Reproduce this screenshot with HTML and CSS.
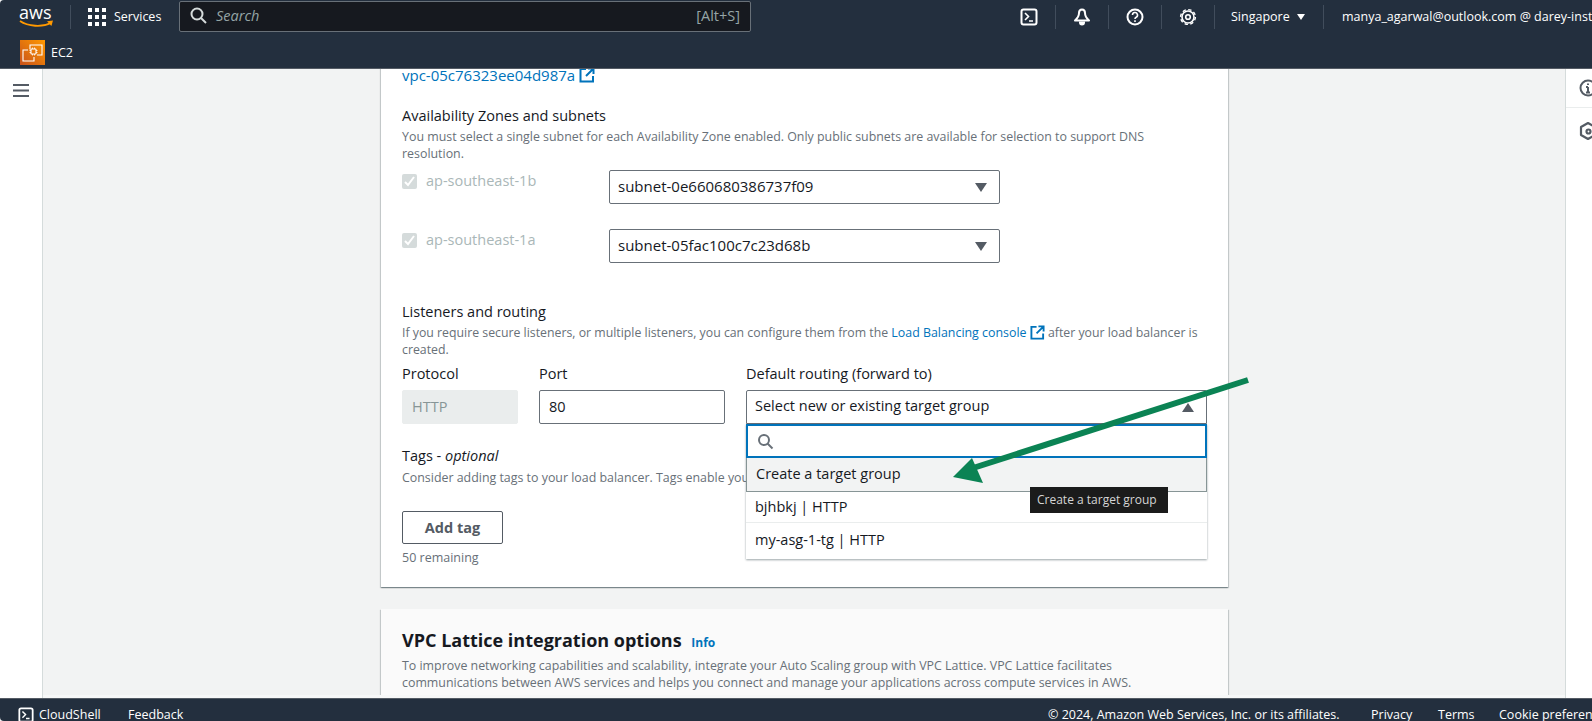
FILE: index.html
```html
<!DOCTYPE html>
<html lang="en">
<head>
  <meta charset="UTF-8">
  <title>Create Auto Scaling group | EC2</title>
  <link rel="stylesheet" href="styles.css">
</head>
<body>
  <header id="top-nav">
    <div class="nav-row">
      <div class="aws-logo">
        <span class="aws-word">aws</span>
        <svg class="aws-smile" width="36" height="9" viewBox="0 0 36 9"><path d="M1 1C9 6.500 23 7.500 32 3" fill="none" stroke="#f90" stroke-width="1.800"/><path d="M28 1.200l6-.7-1.600 5.500z" fill="#f90"/></svg>
      </div>
      <span class="nav-sep sep-logo"></span>
      <svg class="grid-icon" width="18" height="18" viewBox="0 0 18 18" fill="#fff">
        <rect width="4" height="4"/><rect x="7" width="4" height="4"/><rect x="14" width="4" height="4"/>
        <rect y="7" width="4" height="4"/><rect x="7" y="7" width="4" height="4"/><rect x="14" y="7" width="4" height="4"/>
        <rect y="14" width="4" height="4"/><rect x="7" y="14" width="4" height="4"/><rect x="14" y="14" width="4" height="4"/>
      </svg>
      <span class="nav-services">Services</span>
      <div class="nav-search">
        <svg width="17" height="17" viewBox="0 0 17 17" fill="none" stroke="#d5dbdb" stroke-width="2"><circle cx="7" cy="7" r="5.500"/><path d="M11 11l5 5"/></svg>
        <span class="search-hint">Search</span>
        <span class="search-key">[Alt+S]</span>
      </div>
      <div class="nav-right">
        <span class="nav-icon">
          <svg width="18" height="18" viewBox="0 0 18 18" fill="none" stroke="#fff" stroke-width="2"><rect x="1.500" y="1.500" width="15" height="15" rx="2"/><path d="M5 5l3.500 3.500L5 12M9 13h4" stroke-width="1.600"/></svg>
        </span>
        <span class="nav-icon">
          <svg width="18" height="18" viewBox="0 0 18 18" fill="none" stroke="#fff" stroke-width="2"><path d="M9 1.500c-2 0-3 1.500-3 3.500 0 3-1.200 5-4 7.500h14c-2.800-2.500-4-4.500-4-7.500 0-2-1-3.500-3-3.500z" stroke-linejoin="round"/><path d="M7 14.500a2 2 0 0 0 4 0z" fill="#fff"/></svg>
        </span>
        <span class="nav-icon">
          <svg width="18" height="18" viewBox="0 0 18 18" fill="none" stroke="#fff" stroke-width="2"><circle cx="9" cy="9" r="7.500"/><path d="M6.500 7a2.500 2.500 0 1 1 3.700 2.200C9.300 9.700 9 10.200 9 11" stroke-width="1.600"/><path d="M9 12.300v1.700" stroke-width="1.600"/></svg>
        </span>
        <span class="nav-icon">
          <svg width="18" height="18" viewBox="0 0 18 18" fill="none" stroke="#fff"><circle cx="9" cy="9" r="6" stroke-width="1.600"/><circle cx="9" cy="9" r="7.400" stroke-width="1.400" stroke-dasharray="3.400 2.410"/><circle cx="9" cy="9" r="2.300" stroke-width="1.600"/></svg>
        </span>
        <span class="nav-region">Singapore<span class="caret"></span></span>
        <span class="nav-user">manya_agarwal@outlook.com @ darey-instance-account</span>
      </div>
    </div>
    <div class="nav-row service-row">
      <span class="ec2-tile">
        <svg width="21" height="18" viewBox="0 0 21 18" fill="none" stroke="#fff" stroke-width="1.100"><path d="M8 5.500V1h12v10h-5"/><path d="M6 6H1v11h11v-4"/><rect x="9" y="5" width="5" height="5" rx=".5"/><path d="M7.500 6.500H9M7.500 8.500H9M14 6.500h1.500M14 8.500h1.500M10.500 3.500V5M12.500 3.500V5M10.500 10v1.500M12.500 10v1.500" stroke-width=".8"/></svg>
      </span>
      <span class="service-name">EC2</span>
    </div>
  </header>

  <div id="layout">
    <aside class="side-nav">
      <svg width="16" height="13" viewBox="0 0 16 13" fill="none" stroke="#545b64" stroke-width="2"><path d="M0 1h16M0 6.500h16M0 12h16"/></svg>
    </aside>

    <main class="content">
      <section class="card">
        <a class="vpc-link">vpc-05c76323ee04d987a
          <svg class="ext-icon" width="16" height="16" viewBox="0 0 16 16" fill="none" stroke="#0073bb" stroke-width="2"><path d="M7 2H1.500v12.500H14V9M9 1.500h5.500V7M14 2L7 9"/></svg>
        </a>

        <h3 class="field-title zones-title">Availability Zones and subnets</h3>
        <p class="hint">You must select a single subnet for each Availability Zone enabled. Only public subnets are available for selection to support DNS resolution.</p>

        <div class="zone-row">
          <label class="zone-check">
            <span class="checkbox"><svg width="11" height="11" viewBox="0 0 11 11" fill="none" stroke="#fff" stroke-width="2"><path d="M1 6l3 3 6-8"/></svg></span>
            ap-southeast-1b
          </label>
          <div class="select zone-select">subnet-0e660680386737f09<span class="tri"></span></div>
        </div>
        <div class="zone-row second-zone">
          <label class="zone-check">
            <span class="checkbox"><svg width="11" height="11" viewBox="0 0 11 11" fill="none" stroke="#fff" stroke-width="2"><path d="M1 6l3 3 6-8"/></svg></span>
            ap-southeast-1a
          </label>
          <div class="select zone-select">subnet-05fac100c7c23d68b<span class="tri"></span></div>
        </div>

        <h3 class="field-title listeners-title">Listeners and routing</h3>
        <p class="hint hint-tight">If you require secure listeners, or multiple listeners, you can configure them from the <a class="hint-link">Load Balancing console <svg class="ext-icon-sm" width="15" height="15" viewBox="0 0 16 16" fill="none" stroke="#0073bb" stroke-width="2"><path d="M7 2H1.500v12.500H14V9M9 1.500h5.500V7M14 2L7 9"/></svg></a> after your load balancer is created.</p>

        <div class="listener-grid">
          <div class="col-protocol">
            <div class="col-label">Protocol</div>
            <div class="field field-disabled">HTTP</div>
          </div>
          <div class="col-port">
            <div class="col-label">Port</div>
            <div class="field">80</div>
          </div>
          <div class="col-routing">
            <div class="col-label">Default routing (forward to)</div>
            <div class="select-wrap">
              <div class="select routing-select">Select new or existing target group<span class="tri tri-up"></span></div>
              <div class="dropdown">
                <div class="drop-search">
                  <svg width="17" height="17" viewBox="0 0 17 17" fill="none" stroke="#687078" stroke-width="2"><circle cx="7" cy="7" r="5"/><path d="M10.500 10.500l5 5"/></svg>
                </div>
                <div class="drop-item drop-active">Create a target group</div>
                <div class="drop-item">bjhbkj | HTTP</div>
                <div class="drop-item drop-last">my-asg-1-tg | HTTP</div>
                <div class="tooltip">Create a target group</div>
              </div>
            </div>
          </div>
        </div>

        <h3 class="field-title tags-title">Tags - <em>optional</em></h3>
        <p class="hint hint-tags">Consider adding tags to your load balancer. Tags enable you</p>
        <button class="btn">Add tag</button>
        <p class="remaining">50 remaining</p>
      </section>

      <section class="card card-lattice">
        <h2 class="card-title">VPC Lattice integration options <a class="info-link">Info</a></h2>
        <p class="hint">To improve networking capabilities and scalability, integrate your Auto Scaling group with VPC Lattice. VPC Lattice facilitates communications between AWS services and helps you connect and manage your applications across compute services in AWS.</p>
      </section>
    </main>

    <aside class="side-rail">
      <div class="rail-item">
        <svg width="18" height="18" viewBox="0 0 18 18" fill="none" stroke="#545b64" stroke-width="2"><circle cx="9" cy="9" r="7.500"/><path d="M9 8v5.500M7 8h2M7 13.500h4M9 4.500v1.600"/></svg>
      </div>
      <div class="rail-item">
        <svg width="18" height="18" viewBox="0 0 18 18" fill="none" stroke="#545b64" stroke-width="2.200"><path d="M9 1l7 4v8l-7 4-7-4V5z" stroke-linejoin="round"/><circle cx="9.500" cy="9.500" r="2"/></svg>
      </div>
    </aside>
  </div>

  <footer id="footer">
    <svg class="foot-icon" width="16" height="16" viewBox="0 0 18 18" fill="none" stroke="#fff" stroke-width="2"><rect x="1.500" y="1.500" width="15" height="15" rx="2"/><path d="M5 5l3.500 3.500L5 12M9 13h4" stroke-width="1.600"/></svg>
    <span class="foot-cloud">CloudShell</span>
    <span class="foot-feedback">Feedback</span>
    <span class="foot-copy">&copy; 2024, Amazon Web Services, Inc. or its affiliates.</span>
    <span class="foot-privacy">Privacy</span>
    <span class="foot-terms">Terms</span>
    <span class="foot-cookie">Cookie preferences</span>
  </footer>

  <!-- annotation drawn on top of the screenshot -->
  <svg class="annotation" width="1592" height="721" viewBox="0 0 1592 721">
    <path d="M1248 380L970 469" stroke="#0b8354" stroke-width="6" fill="none"/>
    <path d="M953 477L972 458L983 483z" fill="#0b8354"/>
  </svg>
</body>
</html>
```

FILE: styles.css
```css
* {
  box-sizing: border-box;
}

html, body {
  height: 100%;
}

body {
  margin: 0;
  position: relative;
  display: flex;
  flex-direction: column;
  height: 100vh;
  overflow: hidden;
  font-family: "Open Sans", Arial, sans-serif;
  font-size: 14.5px;
  line-height: 20px;
  color: #16191f;
  background: #f7f8f8;
}

/* top nav */
#top-nav {
  flex: none;
  height: 69px;
  background: #232f3e;
  border-bottom: 1px solid #545b64;
  border-top-left-radius: 4px;
  color: #fff;
}

.nav-row {
  display: flex;
  align-items: center;
  height: 33px;
}

.aws-logo {
  flex: none;
  display: flex;
  flex-direction: column;
  width: 34px;
  margin-left: 19px;
}

.aws-word {
  font-size: 18px;
  line-height: 14px;
  height: 15px;
}

.aws-smile {
  display: block;
}

.nav-sep {
  flex: none;
  width: 1px;
  height: 24px;
  background: #414d5c;
}

.sep-logo {
  margin-left: 17px;
}

.grid-icon {
  flex: none;
  margin-left: 17px;
}

.nav-services {
  flex: none;
  margin-left: 8px;
  width: 65px;
  font-size: 12.5px;
}

.nav-search {
  flex: none;
  display: flex;
  align-items: center;
  width: 572px;
  height: 31px;
  padding: 0 10px 2px;
  background: #16191f;
  border: 1px solid #687078;
  border-radius: 2px;
  font-size: 14.5px;
  color: #95a5a6;
}

.search-hint {
  margin-left: 9px;
  font-style: italic;
}

.search-key {
  margin-left: auto;
}

.nav-right {
  flex: none;
  display: flex;
  align-items: center;
  height: 33px;
  margin-left: 252px;
  white-space: nowrap;
}

.nav-icon {
  display: flex;
  align-items: center;
  justify-content: center;
  width: 53px;
  height: 24px;
  border-right: 1px solid #414d5c;
}

.nav-region {
  display: flex;
  align-items: center;
  width: 109px;
  height: 24px;
  padding-left: 16px;
  font-size: 12.5px;
  border-right: 1px solid #414d5c;
}

.caret {
  width: 0;
  height: 0;
  margin-left: 7px;
  border-left: 4.500px solid transparent;
  border-right: 4.500px solid transparent;
  border-top: 6px solid #fff;
}

.nav-user {
  padding-left: 18px;
  font-size: 12.5px;
}

.service-row {
  height: 35px;
  padding: 4px 0 0 20px;
}

.ec2-tile {
  display: flex;
  align-items: center;
  justify-content: center;
  width: 25px;
  height: 25px;
  background: linear-gradient(45deg, #c8511b, #f90);
}

.service-name {
  margin-left: 6px;
  font-size: 12.5px;
}

/* page body */
#layout {
  flex: 1;
  display: flex;
  min-height: 0;
  overflow: hidden;
}

.side-nav {
  flex: none;
  width: 43px;
  padding: 15px 0 0 13px;
  background: #fff;
  border-right: 1px solid #d5dbdb;
}

.side-nav svg {
  display: block;
}

.content {
  flex: 1;
  height: 626px;
  padding: 0 337px 0 338px;
  overflow: hidden;
  background: #f2f3f3;
}

.card {
  padding: 0 20px 21px 21px;
  margin-top: -4px;
  background: #fff;
  box-shadow: 0 1px 1px 0 rgba(0, 28, 36, 0.3), 1px 1px 1px 0 rgba(0, 28, 36, 0.15), -1px 1px 1px 0 rgba(0, 28, 36, 0.15);
}

.vpc-link {
  display: block;
  font-size: 15px;
  color: #0073bb;
}

.ext-icon {
  vertical-align: -2px;
}

.field-title {
  margin: 0;
  font-size: 14.5px;
  font-weight: 400;
  line-height: 20px;
}

.zones-title {
  margin-top: 21px;
}

.hint {
  max-width: 800px;
  margin: 2px 0 0;
  font-size: 12.4px;
  line-height: 17px;
  color: #687078;
}

.hint-tight {
  max-width: 806px;
  margin-top: 2px;
  font-size: 12.3px;
}

.hint-link {
  font-size: 12.4px;
  color: #0073bb;
}

.ext-icon-sm {
  vertical-align: -3px;
}

.zone-row {
  display: flex;
  margin-top: 8px;
}

.second-zone {
  margin-top: 25px;
}

.zone-check {
  display: flex;
  align-items: flex-start;
  width: 207px;
  padding-top: 1px;
  color: #aab7b8;
}

.checkbox {
  display: flex;
  align-items: center;
  justify-content: center;
  width: 15px;
  height: 15px;
  margin: 3px 9px 0 0;
  background: #d5dbdb;
  border-radius: 2px;
}

.select {
  position: relative;
  height: 34px;
  padding: 0 8px;
  background: #fff;
  border: 1px solid #687078;
  border-radius: 2px;
  line-height: 30px;
}

.zone-select {
  width: 391px;
  font-size: 15px;
}

.tri {
  position: absolute;
  top: 12px;
  right: 12px;
  width: 0;
  height: 0;
  border-left: 6px solid transparent;
  border-right: 6px solid transparent;
  border-top: 9px solid #545b64;
}

.tri-up {
  border-top: 0;
  border-bottom: 9px solid #545b64;
}

.listeners-title {
  margin-top: 39px;
}

.listener-grid {
  display: flex;
  margin-top: 6px;
}

.col-label {
  height: 20px;
  margin-bottom: 6px;
}

.col-protocol {
  width: 116px;
}

.col-port {
  width: 186px;
  margin-left: 21px;
}

.col-routing {
  width: 461px;
  margin-left: 21px;
}

.field {
  height: 34px;
  padding: 0 9px;
  border: 1px solid #687078;
  border-radius: 2px;
  line-height: 32px;
}

.field-disabled {
  background: #eaeded;
  border-color: #eaeded;
  color: #879596;
}

.select-wrap {
  position: relative;
}

.routing-select {
  border-radius: 2px 2px 0 0;
}

/* dropdown lies over the tags section */
.dropdown {
  position: absolute;
  top: 34px;
  left: 0;
  right: 0;
  z-index: 2;
  background: #fff;
  box-shadow: 0 1px 2px rgba(0, 28, 36, 0.4);
}

.drop-search {
  display: flex;
  align-items: center;
  height: 34px;
  padding-left: 9px;
  border: 2px solid #0073bb;
}

.drop-item {
  height: 31px;
  padding: 0 9px;
  line-height: 29px;
  border-bottom: 1px solid #eaeded;
}

.drop-active {
  height: 34px;
  background: #f2f3f3;
  border: 1px solid #879596;
  border-top: 0;
  line-height: 31px;
}

.drop-last {
  height: 36px;
  border-bottom: 0;
  line-height: 33px;
}

.tooltip {
  position: absolute;
  top: 63px;
  left: 284px;
  width: 138px;
  height: 26px;
  padding-left: 7px;
  background: #1b1b1b;
  color: #d5d5d5;
  font-size: 12px;
  line-height: 25px;
  white-space: nowrap;
}

.tags-title {
  margin-top: 22px;
}

.hint-tags {
  margin-top: 3px;
}

.btn {
  display: block;
  width: 101px;
  height: 33px;
  margin-top: 25px;
  padding: 0;
  background: #fff;
  border: 1px solid #545b64;
  border-radius: 2px;
  font-family: inherit;
  font-size: 14.5px;
  font-weight: 700;
  color: #545b64;
}

.remaining {
  margin: 5px 0 0;
  font-size: 12.5px;
  line-height: 17px;
  color: #687078;
}

.card-lattice {
  margin-top: 22px;
  padding-top: 18px;
  background: #fafafa;
}

.card-title {
  margin: 0;
  font-size: 18px;
  font-weight: 700;
  line-height: 26px;
}

.info-link {
  margin-left: 5px;
  font-size: 12px;
  color: #0073bb;
}

.card-lattice .hint {
  margin-top: 1px;
}

.side-rail {
  flex: none;
  width: 27px;
  background: #fff;
  border-left: 1px solid #d5dbdb;
}

.rail-item {
  height: 39px;
  padding: 10px 0 0 13px;
  border-bottom: 1px solid #eaeded;
  white-space: nowrap;
}

.rail-item + .rail-item {
  height: 47px;
  padding-top: 14px;
  border-bottom: 0;
}

/* footer */
#footer {
  flex: none;
  display: flex;
  align-items: center;
  height: 23px;
  padding-top: 10px;
  background: #232f3e;
  border-top: 1px solid #545b64;
  border-bottom-left-radius: 4px;
  color: #fff;
  font-size: 12.5px;
  white-space: nowrap;
  overflow: hidden;
}

.foot-icon {
  flex: none;
  margin-left: 18px;
}

.foot-cloud {
  flex: none;
  margin-left: 5px;
  width: 62px;
}

.foot-feedback {
  flex: none;
  margin-left: 27px;
  width: 54px;
}

.foot-copy {
  flex: none;
  margin-left: 866px;
  width: 291px;
}

.foot-privacy {
  flex: none;
  margin-left: 32px;
  width: 41px;
}

.foot-terms {
  flex: none;
  margin-left: 26px;
  width: 36px;
}

.foot-cookie {
  flex: none;
  margin-left: 25px;
}

.annotation {
  position: absolute;
  top: 0;
  left: 0;
  z-index: 3;
  pointer-events: none;
}
```
